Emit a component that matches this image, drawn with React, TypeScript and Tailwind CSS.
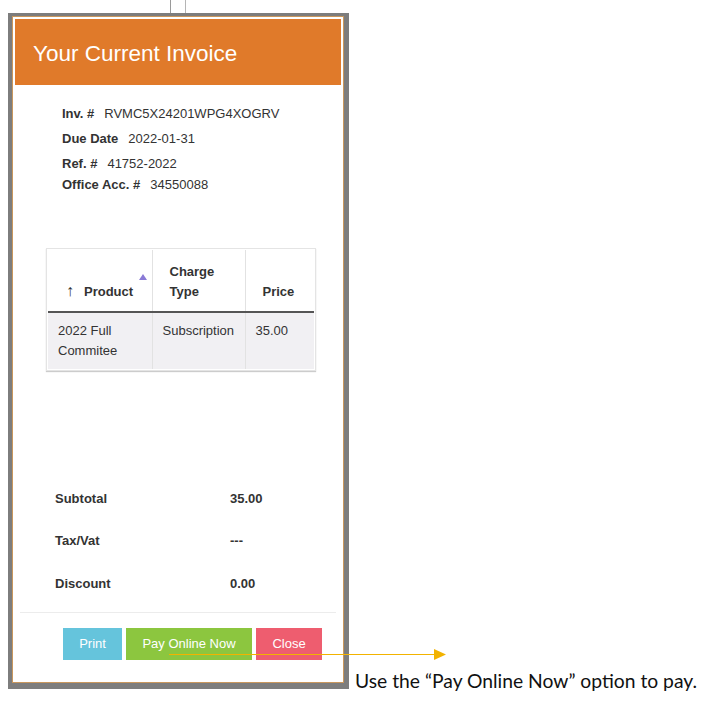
import React from "react";

const font = { fontFamily: '"Liberation Sans", Arial, sans-serif' };

function InfoRow({ label, value, className = "" }: { label: string; value: string; className?: string }) {
  return (
    <div className={`flex items-center gap-[10px] text-[13px] leading-[16px] text-[#333] ${className}`}>
      <span className="font-bold">{label}</span>
      <span>{value}</span>
    </div>
  );
}

function SummaryRow({ label, value }: { label: string; value: string }) {
  return (
    <div className="flex h-[42.5px] items-center text-[13px] font-bold text-[#333]">
      <span className="w-[175px]">{label}</span>
      <span>{value}</span>
    </div>
  );
}

export default function App() {
  return (
    <div className="relative h-[706px] w-[701px] overflow-hidden bg-white" style={font}>
      {/* faint page lines behind the modal */}
      <div className="absolute left-[170px] top-0 h-[13px] w-[1px] bg-[#9a9a9a]" />
      <div className="absolute left-[185px] top-0 h-[13px] w-[1px] bg-[#b5b5b5]" />

      <div className="flex items-end pl-[8px] pt-[13px]">
        <div className="h-[676px] w-[341px] shrink-0 border-b-[6px] border-l-[4px] border-r-[5px] border-t-[3px] border-[#7d7d7d]">
          <div className="flex h-full flex-col border border-[#c9975d] bg-white px-[2px] pb-[2px] pt-[2px]">
            <div className="flex h-[66px] items-center bg-[#e07a2a] pl-[18px] pr-[3px] pt-[3px]">
              <h1 className="text-[22.5px] font-normal text-white">Your Current Invoice</h1>
            </div>

            <div className="flex flex-col pl-[47px] pt-[21px]">
              <InfoRow label="Inv. #" value="RVMC5X24201WPG4XOGRV" />
              <InfoRow label="Due Date" value="2022-01-31" className="mt-[9px]" />
              <InfoRow label="Ref. #" value="41752-2022" className="mt-[9px]" />
              <InfoRow label="Office Acc. #" value="34550088" className="mt-[5px]" />
            </div>

            <div className="ml-[31px] mt-[55px] w-[270px] border border-[#e4e4e4] p-[1px] shadow-[0_1px_1px_rgba(0,0,0,0.2)]">
              <table className="w-full border-collapse text-[13px] leading-[20px] text-[#333]">
                <thead>
                  <tr className="h-[62px] border-b-2 border-[#555]">
                    <th className="relative w-[104px] border-r border-[#e2e2e2] pb-[9px] pl-[18px] text-left align-bottom font-bold">
                      <span className="mr-[10px] text-[16px] font-normal leading-[20px]">↑</span>Product
                      <span className="absolute right-[5px] top-[24px] h-0 w-0 border-x-[4px] border-b-[6px] border-x-transparent border-b-[#8a7ad6]" />
                    </th>
                    <th className="w-[93px] border-r border-[#e2e2e2] pb-[9px] pl-[17px] text-left align-bottom font-bold">
                      Charge
                      <br />
                      Type
                    </th>
                    <th className="pb-[9px] pl-[17px] text-left align-bottom font-bold">Price</th>
                  </tr>
                </thead>
                <tbody>
                  <tr className="h-[57px] bg-[#f1f0f3]">
                    <td className="border-r border-[#e2e2e2] pl-[10px] pt-[8px] align-top">
                      2022 Full
                      <br />
                      Commitee
                    </td>
                    <td className="border-r border-[#e2e2e2] pl-[10px] pt-[8px] align-top">Subscription</td>
                    <td className="pl-[10px] pt-[8px] align-top">35.00</td>
                  </tr>
                </tbody>
              </table>
            </div>

            <div className="ml-[40px] mt-[106px] flex flex-col">
              <SummaryRow label="Subtotal" value="35.00" />
              <SummaryRow label="Tax/Vat" value="---" />
              <SummaryRow label="Discount" value="0.00" />
            </div>

            <div className="mx-[5px] mt-[7px] h-[1px] bg-[#ececec]" />

            <div className="ml-[48px] mt-[15px] flex gap-[4px] text-[13px] text-white">
              <button className="h-[32px] w-[59px] bg-[#65c4dc]">Print</button>
              <button className="h-[32px] w-[126px] bg-[#8cc63f]">Pay Online Now</button>
              <button className="h-[32px] w-[66px] bg-[#ee5d6f]">Close</button>
            </div>
          </div>
        </div>

        <p
          className="mb-[-3px] ml-[6px] whitespace-nowrap text-[19.3px] leading-[22px] text-[#111]"
          style={{ fontFamily: 'Lato, "Open Sans", sans-serif' }}
        >
          Use the “Pay Online Now” option to pay.
        </p>
      </div>

      {/* callout arrow */}
      <svg className="absolute left-0 top-0" width="701" height="706" viewBox="0 0 701 706">
        <line x1="169" y1="654.5" x2="436" y2="654.5" stroke="#f2b300" strokeWidth="1.2" />
        <polygon points="434,649 446,654.5 434,660" fill="#f2b300" />
      </svg>
    </div>
  );
}
